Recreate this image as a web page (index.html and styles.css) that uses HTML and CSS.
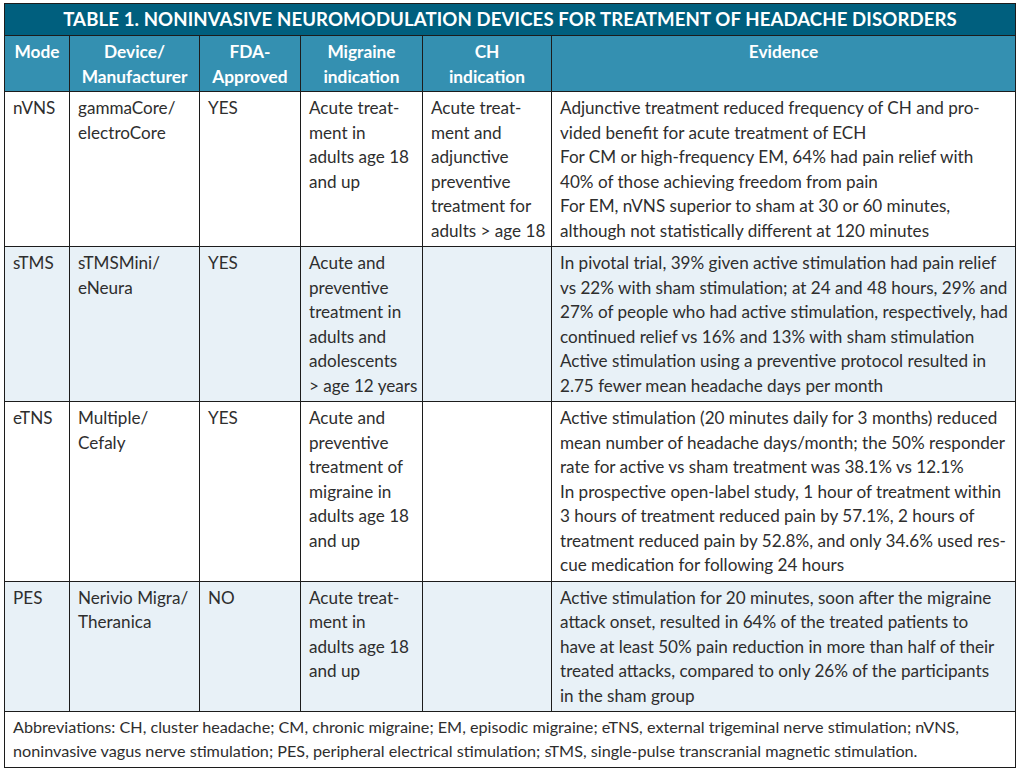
FILE: index.html
```html
<!DOCTYPE html>
<html>
<head>
<meta charset="utf-8">
<link rel="stylesheet" href="styles.css">
</head>
<body>
<div class="page">
<table class="devices">
  <colgroup>
    <col class="c-mode"><col class="c-device"><col class="c-fda"><col class="c-mig"><col class="c-ch"><col class="c-evid">
  </colgroup>
  <thead>
    <tr class="title-row"><th colspan="6">TABLE 1. NONINVASIVE NEUROMODULATION DEVICES FOR TREATMENT OF HEADACHE DISORDERS</th></tr>
    <tr class="head-row">
      <th>Mode</th>
      <th>Device/<br>Manufacturer</th>
      <th>FDA-<br>Approved</th>
      <th>Migraine<br>indication</th>
      <th>CH<br>indication</th>
      <th>Evidence</th>
    </tr>
  </thead>
  <tbody>
    <tr class="row r1">
      <td>nVNS</td>
      <td>gammaCore/<br>electroCore</td>
      <td>YES</td>
      <td>Acute treat-<br>ment in<br>adults age 18<br>and up</td>
      <td>Acute treat-<br>ment and<br>adjunctive<br>preventive<br>treatment for<br>adults &gt; age 18</td>
      <td>Adjunctive treatment reduced frequency of CH and pro-<br>vided benefit for acute treatment of ECH<br>For CM or high-frequency EM, 64% had pain relief with<br>40% of those achieving freedom from pain<br>For EM, nVNS superior to sham at 30 or 60 minutes,<br>although not statistically different at 120 minutes</td>
    </tr>
    <tr class="row r2 alt">
      <td>sTMS</td>
      <td>sTMSMini/<br>eNeura</td>
      <td>YES</td>
      <td>Acute and<br>preventive<br>treatment in<br>adults and<br>adolescents<br>&gt; age 12 years</td>
      <td></td>
      <td>In pivotal trial, 39% given active stimulation had pain relief<br>vs 22% with sham stimulation; at 24 and 48 hours, 29% and<br>27% of people who had active stimulation, respectively, had<br>continued relief vs 16% and 13% with sham stimulation<br>Active stimulation using a preventive protocol resulted in<br>2.75 fewer mean headache days per month</td>
    </tr>
    <tr class="row r3">
      <td>eTNS</td>
      <td>Multiple/<br>Cefaly</td>
      <td>YES</td>
      <td>Acute and<br>preventive<br>treatment of<br>migraine in<br>adults age 18<br>and up</td>
      <td></td>
      <td>Active stimulation (20 minutes daily for 3 months) reduced<br>mean number of headache days/month; the 50% responder<br>rate for active vs sham treatment was 38.1% vs 12.1%<br>In prospective open-label study, 1 hour of treatment within<br>3 hours of treatment reduced pain by 57.1%, 2 hours of<br>treatment reduced pain by 52.8%, and only 34.6% used res-<br>cue medication for following 24 hours</td>
    </tr>
    <tr class="row r4 alt">
      <td>PES</td>
      <td>Nerivio Migra/<br>Theranica</td>
      <td>NO</td>
      <td>Acute treat-<br>ment in<br>adults age 18<br>and up</td>
      <td></td>
      <td>Active stimulation for 20 minutes, soon after the migraine<br>attack onset, resulted in 64% of the treated patients to<br>have at least 50% pain reduction in more than half of their<br>treated attacks, compared to only 26% of the participants<br>in the sham group</td>
    </tr>
  </tbody>
  <tfoot>
    <tr class="foot-row">
      <td colspan="6">Abbreviations: CH, cluster headache; CM, chronic migraine; EM, episodic migraine; eTNS, external trigeminal nerve stimulation; nVNS,<br>noninvasive vagus nerve stimulation; PES, peripheral electrical stimulation; sTMS, single-pulse transcranial magnetic stimulation.</td>
    </tr>
  </tfoot>
</table>
</div>
</body>
</html>
```

FILE: styles.css
```css
html, body {
  margin: 0;
  padding: 0;
  background: #ffffff;
}

.page {
  padding: 3px 0 0 4px;
}

.devices {
  border-collapse: collapse;
  width: 1011px;
  table-layout: fixed;
  font-family: "Lato", "Open Sans", sans-serif;
  font-size: 17.1px;
  line-height: 24.5px;
  color: #2e2e2e;
  border: 1px solid #1c1c1c;
}

.c-mode { width: 65px; }
.c-device { width: 130px; }
.c-fda { width: 101px; }
.c-mig { width: 122px; }
.c-ch { width: 129px; }
.c-evid { width: 464px; }

.title-row th {
  background: #005f7e;
  color: #ffffff;
  font-weight: 700;
  font-size: 18.6px;
  height: 31px;
  padding: 0;
  text-align: center;
  letter-spacing: 0.1px;
  border-bottom: 1px solid #1c1c1c;
}

.head-row th {
  background: #3490b1;
  color: #ffffff;
  font-weight: 700;
  font-size: 17.3px;
  text-align: center;
  vertical-align: top;
  padding: 4px 4px 2px;
  height: 46px;
  border: 1px solid #1c1c1c;
  white-space: nowrap;
}

.row td {
  vertical-align: top;
  padding: 4px 6px 3px 8px;
  border: 1px solid #1c1c1c;
  white-space: nowrap;
}

.row.alt td {
  background: #e8f1f7;
}

.r1 td { height: 145px; }
.r2 td { height: 147px; }
.r3 td { height: 170px; }
.r4 td { height: 122px; }

.foot-row td {
  font-size: 16.2px;
  line-height: 24px;
  padding: 3px 8px 4px 8px;
  border: 1px solid #1c1c1c;
  white-space: nowrap;
  height: 47px;
  vertical-align: top;
}
```
